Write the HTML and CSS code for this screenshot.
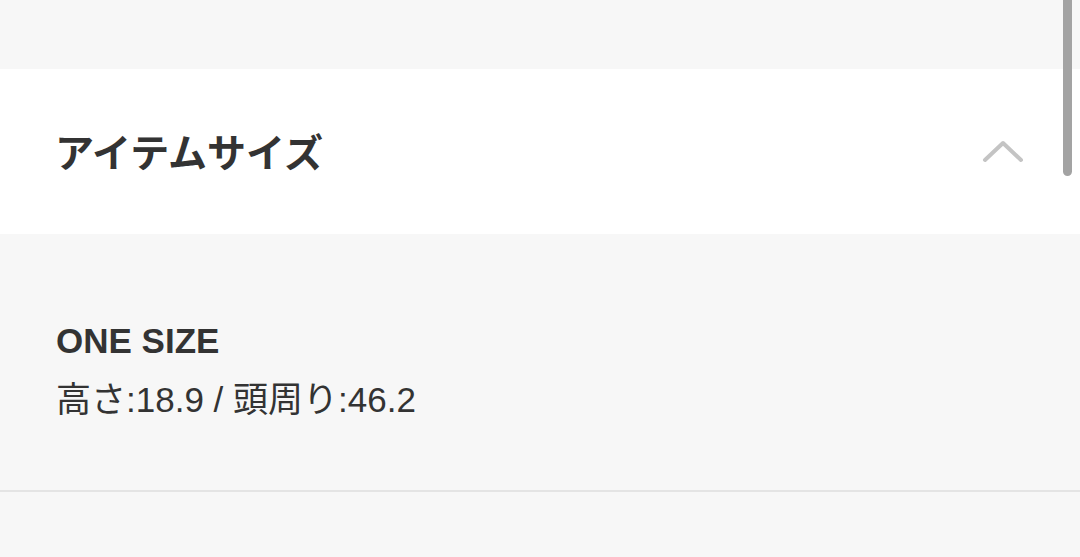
FILE: index.html
```html
<!DOCTYPE html>
<html lang="ja">
<head>
    <meta charset="UTF-8">
    <meta name="viewport" content="width=device-width, initial-scale=1.0">
    <title>アイテムサイズ</title>
    <link rel="stylesheet" href="styles.css">
</head>
<body>
    <div class="page">
        <div class="top-space"></div>

        <div class="accordion-head">
            <h2>アイテムサイズ</h2>
            <svg class="chevron" width="42" height="24" viewBox="0 0 42 24">
                <polyline points="3,20 21,3 39,20" fill="none" stroke="#c4c4c4" stroke-width="4" stroke-linecap="round" stroke-linejoin="round"/>
            </svg>
        </div>

        <div class="accordion-body">
            <p class="size-name">ONE SIZE</p>
            <p class="size-detail">高さ:18.9 / 頭周り:46.2</p>
        </div>

        <div class="bottom-space"></div>
    </div>

    <div class="scrollbar"></div>
</body>
</html>
```

FILE: styles.css
```css
* {
    margin: 0;
    padding: 0;
    box-sizing: border-box;
    font-family: "Liberation Sans", "Noto Sans CJK JP", sans-serif;
}

body {
    background-color: #f7f7f7;
    color: #333333;
    overflow: hidden;
}

.page {
    width: 100%;
}

.top-space {
    height: 69px;
}

.accordion-head {
    height: 165px;
    background: #ffffff;
    display: flex;
    align-items: center;
    justify-content: space-between;
    padding: 0 56px 4px 55px;
}

.accordion-head h2 {
    font-family: "Noto Sans CJK JP", sans-serif;
    font-size: 39px;
    font-weight: 700;
    color: #333333;
}

.chevron {
    margin-top: 4px;
}

.accordion-body {
    height: 258px;
    padding: 85px 56px 0 56px;
    border-bottom: 2px solid #e4e4e4;
}

.size-name {
    font-size: 35px;
    font-weight: 700;
    line-height: 44px;
}

.size-detail {
    font-size: 35px;
    font-weight: 400;
    line-height: 44px;
    margin-top: 15px;
}

.bottom-space {
    height: 70px;
}

.scrollbar {
    position: absolute;
    top: 0;
    left: 1063px;
    width: 9px;
    height: 176px;
    background: #a3a3a3;
    border-radius: 0 0 5px 5px;
}
```
